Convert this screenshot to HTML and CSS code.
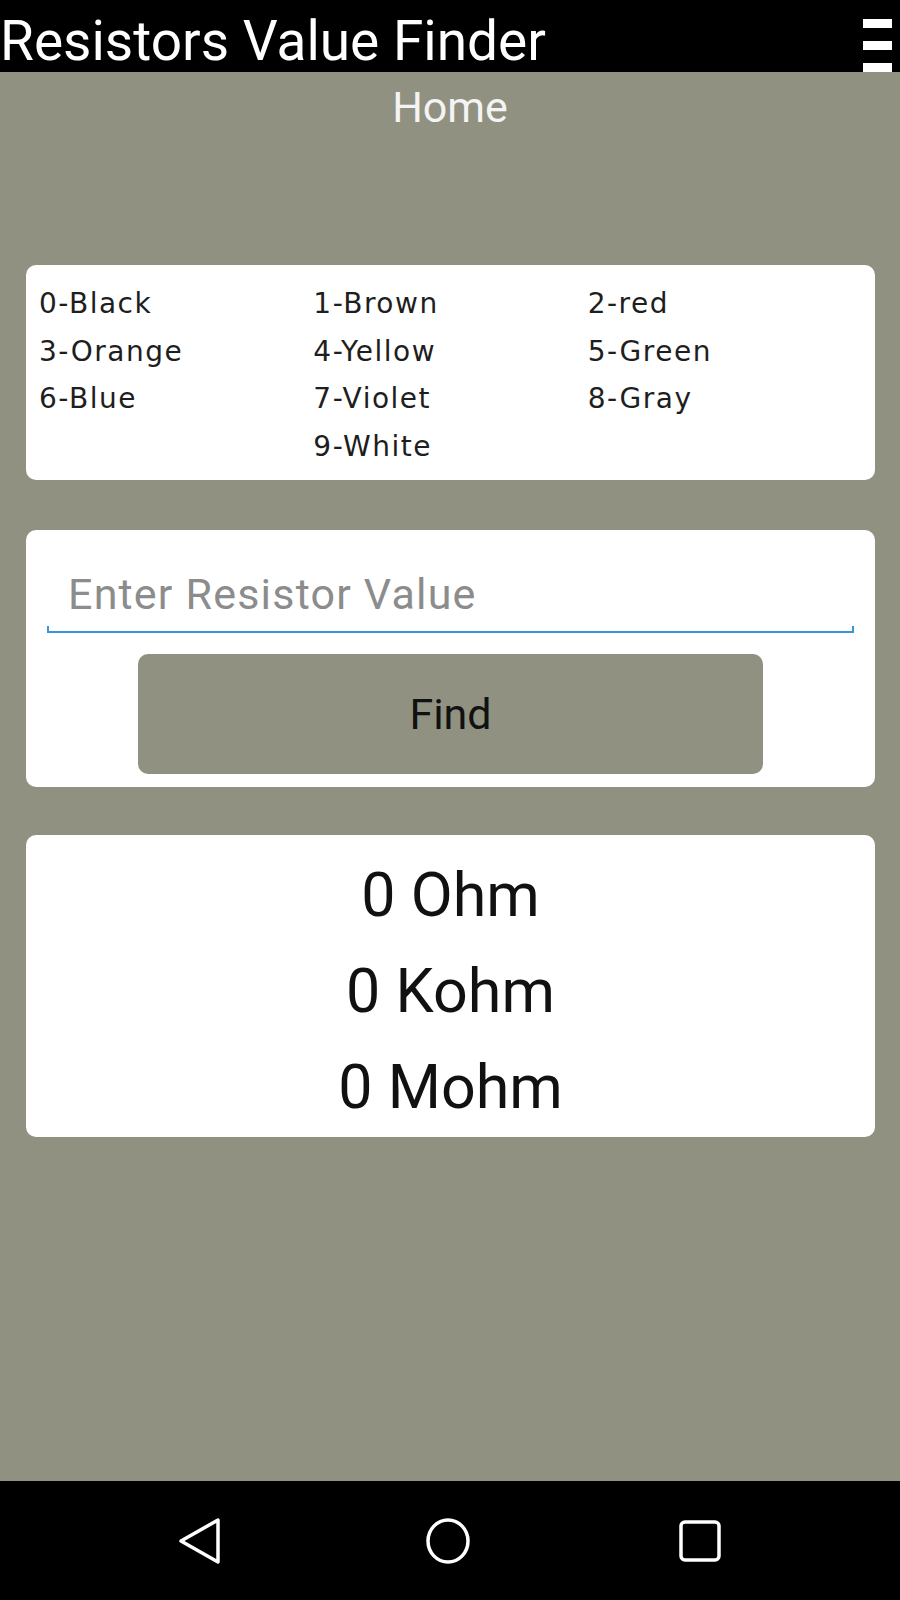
FILE: index.html
```html
<!DOCTYPE html>
<html>
<head>
    <meta charset="UTF-8">
    <title>Resistors Value Finder</title>
    <link rel="stylesheet" href="styles.css">
</head>
<body>
    <div class="app">
        <div class="toolbar">
            <div class="title">Resistors Value Finder</div>
            <div class="menu">
                <span></span>
                <span></span>
                <span></span>
            </div>
        </div>

        <div class="page-title">Home</div>

        <div class="card codes">
            <div>0-Black</div>
            <div>1-Brown</div>
            <div>2-red</div>
            <div>3-Orange</div>
            <div>4-Yellow</div>
            <div>5-Green</div>
            <div>6-Blue</div>
            <div>7-Violet</div>
            <div>8-Gray</div>
            <div></div>
            <div>9-White</div>
            <div></div>
        </div>

        <div class="card finder">
            <div class="field">
                <input type="text" id="resValue" placeholder="Enter Resistor Value">
            </div>
            <button class="find-btn" onclick="findValue()">Find</button>
        </div>

        <div class="card results">
            <div id="ohm">0 Ohm</div>
            <div id="kohm">0 Kohm</div>
            <div id="mohm">0 Mohm</div>
        </div>

        <div class="navbar">
            <svg class="nav-icon" viewBox="0 0 48 48">
                <path d="M5 24 L42 3 L42 45 Z" fill="none" stroke="#fff" stroke-width="3.5" stroke-linejoin="round"/>
            </svg>
            <svg class="nav-icon" viewBox="0 0 48 48">
                <ellipse cx="24" cy="24" rx="20" ry="21" fill="none" stroke="#fff" stroke-width="3.5"/>
            </svg>
            <svg class="nav-icon recent" viewBox="0 0 48 48">
                <rect x="5" y="5" width="38" height="38" rx="4" fill="none" stroke="#fff" stroke-width="3.5"/>
            </svg>
        </div>
    </div>

    <script>
        // convert a number like 4700 into ohm / kohm / mohm
        function findValue() {
            const v = parseFloat(document.getElementById('resValue').value) || 0;
            document.getElementById('ohm').textContent = v + ' Ohm';
            document.getElementById('kohm').textContent = (v / 1000) + ' Kohm';
            document.getElementById('mohm').textContent = (v / 1000000) + ' Mohm';
        }
    </script>
</body>
</html>
```

FILE: styles.css
```css
body {
    margin: 0;
    background-color: #909180;
    font-family: Roboto, "Liberation Sans", sans-serif;
}
.app {
    display: flex;
    flex-direction: column;
    min-height: 100vh;
}
.toolbar {
    height: 72px;
    background-color: #000;
    display: flex;
    justify-content: space-between;
    align-items: flex-start;
}
.title {
    color: #fff;
    font-size: 55px;
    line-height: 56px;
    padding-top: 13px;
}
.menu {
    display: flex;
    flex-direction: column;
    gap: 13px;
    padding-top: 19px;
    margin-right: 8px;
}
.menu span {
    display: block;
    width: 29px;
    height: 9px;
    background-color: #fff;
}
.page-title {
    color: #f4f4f4;
    font-size: 43px;
    line-height: 40px;
    text-align: center;
    margin-top: 15px;
}
.card {
    background-color: #fff;
    border-radius: 10px;
    margin: 0 25px 0 26px;
}
.codes {
    margin-top: 138px;
    padding: 15px 13px 10px;
    display: grid;
    grid-template-columns: 1fr 1fr 1fr;
    font-family: "DejaVu Sans", sans-serif;
    font-size: 28px;
    letter-spacing: 1.5px;
    line-height: 47.5px;
    color: #1e1e1e;
}
.finder {
    margin-top: 50px;
    padding: 30px 21px 13px;
    display: flex;
    flex-direction: column;
    align-items: center;
}
.field {
    position: relative;
    align-self: stretch;
}
.field::before,
.field::after {
    content: "";
    position: absolute;
    bottom: 0;
    width: 2px;
    height: 7px;
    background-color: #3a97d6;
}
.field::before {
    left: 0;
}
.field::after {
    right: 0;
}
.field input {
    display: block;
    width: 100%;
    box-sizing: border-box;
    height: 73px;
    padding: 0 21px 4px;
    border: none;
    border-bottom: 2px solid #3a97d6;
    outline: none;
    font-family: Roboto, sans-serif;
    font-size: 43px;
    letter-spacing: 1.2px;
    color: #222;
    background: transparent;
}
.field input::placeholder {
    color: #8c8c8c;
}
.find-btn {
    margin-top: 21px;
    width: 625px;
    height: 120px;
    border: none;
    border-radius: 10px;
    background-color: #909180;
    font-family: Roboto, sans-serif;
    font-size: 43px;
    color: #111;
    cursor: pointer;
}
.results {
    margin-top: 48px;
    padding: 12px 0 2px;
    text-align: center;
    font-size: 61px;
    line-height: 96px;
    color: #111;
}
.navbar {
    margin-top: auto;
    height: 119px;
    background-color: #000;
    display: flex;
    justify-content: center;
    align-items: center;
    gap: 200px;
}
.nav-icon {
    width: 48px;
    height: 48px;
}
.recent {
    margin-left: 4px;
}
```
